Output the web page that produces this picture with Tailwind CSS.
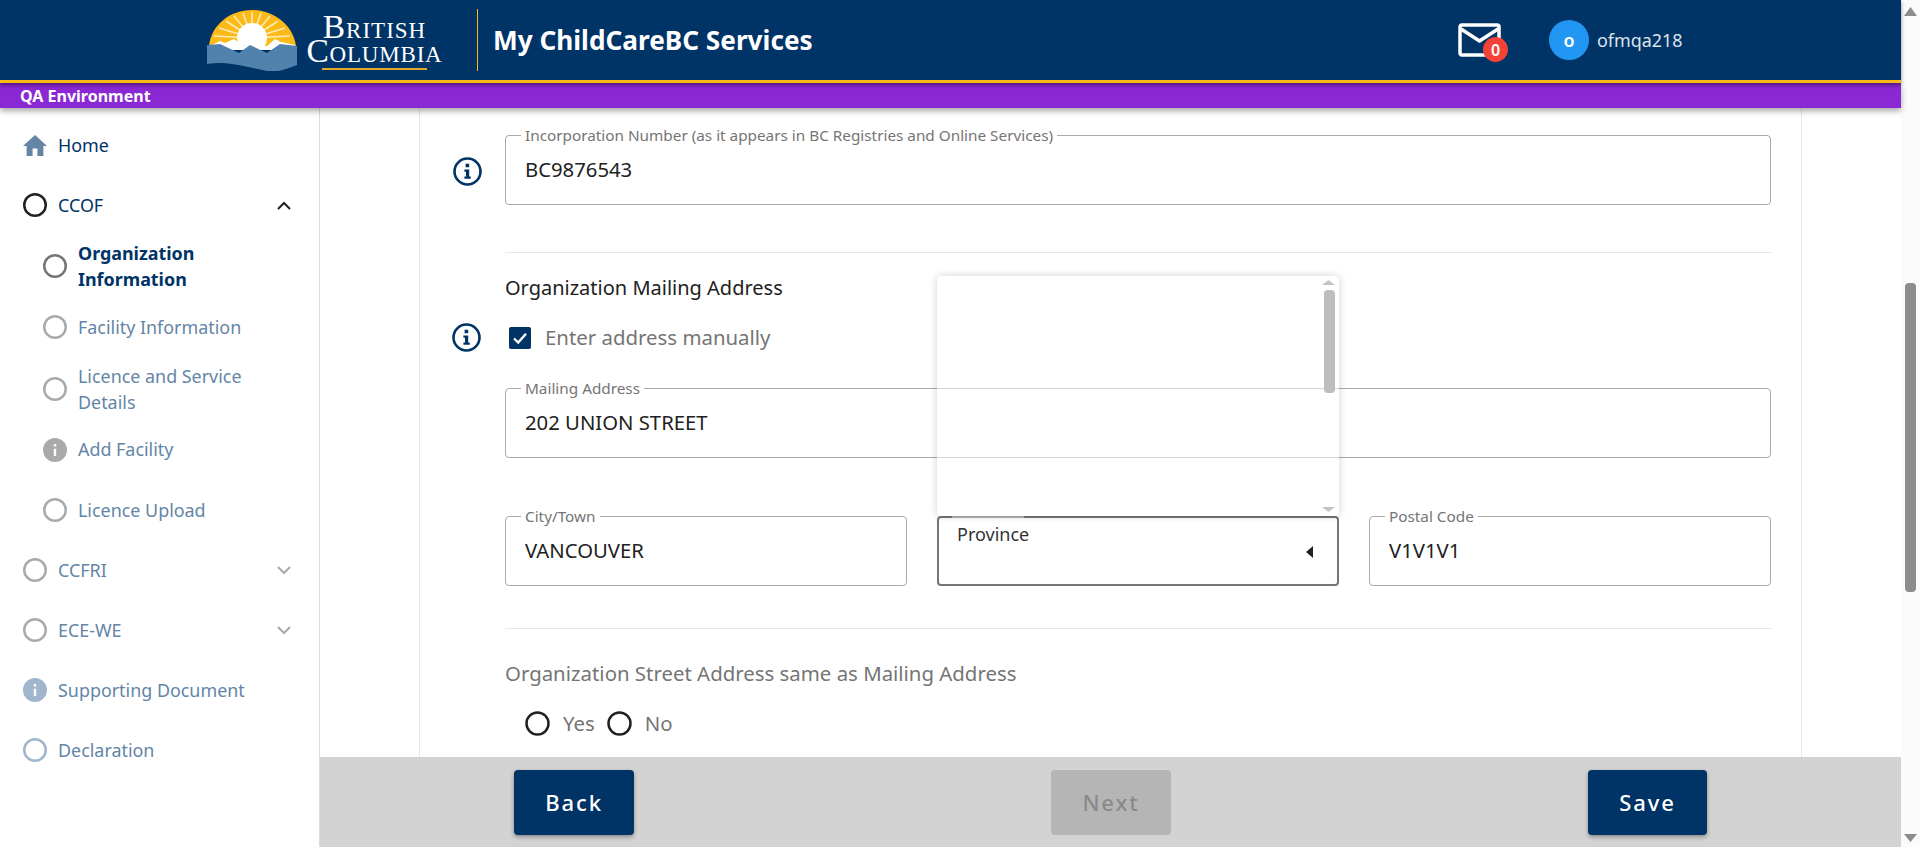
<!DOCTYPE html>
<html lang="en">
<head>
<meta charset="utf-8">
<title>My ChildCareBC Services</title>
<script src="https://cdn.jsdelivr.net/npm/@tailwindcss/browser@4"></script>
</head>
<body class="h-screen overflow-hidden bg-white font-['Noto_Sans',sans-serif]">
<div class="flex h-[847px] w-[1920px]">
  <div class="flex w-[1901px] flex-col">
    <header class="relative z-30 flex h-[83px] shrink-0 items-center border-b-[3px] border-[#fcba19] bg-[#003366] shadow-[0_2px_4px_rgba(0,0,0,0.45)]">
      <svg class="ml-[207px] h-[61px] w-[90px] shrink-0" viewBox="0 0 90 61">
        <path d="M2 36C4 15 23 0 45 0s41 15 44 36z" fill="#fcba19"/>
        <g stroke="#fff5d0" stroke-width="1.6" opacity="0.85">
          <path d="M45 28V2M45 28L36 3M45 28L54 3M45 28L27 6M45 28L63 6M45 28L19 11M45 28L71 11M45 28L12 18M45 28L78 18M45 28L7 26M45 28L83 26"/>
        </g>
        <circle cx="45" cy="28" r="15" fill="#fff"/>
        <path d="M3 36L13 31L18 33L27 29L36 36H60L68 29L74 32L88 35V40H3z" fill="#fff"/>
        <path d="M0 35L13 34L32 43L43 35L60 43L73 34L90 36V55C82 58 72 63 60 61C35 56 20 51 0 54z" fill="#5182ad"/>
      </svg>
      <div class="ml-[10px] mt-[15px] w-[135px] shrink-0 self-start text-center font-['Liberation_Serif',serif] whitespace-nowrap text-white [font-variant:small-caps]">
        <div class="text-[33.5px] leading-[24px] tracking-[1px]">British</div>
        <div class="-mx-[2px] text-[33.5px] leading-[24px] tracking-[0.8px]">Columbia</div>
        <div class="mx-auto mt-[5px] h-[2px] w-[105px] bg-[#e3a82b]"></div>
      </div>
      <div class="ml-[35px] h-[62px] w-[1px] shrink-0 bg-[#fcba19]"></div>
      <div class="ml-[15px] w-[320px] shrink-0 whitespace-nowrap text-[26.2px] leading-[32px] font-bold text-white">My ChildCareBC Services</div>
      <div class="relative ml-[645px] h-[34px] w-[43px] shrink-0">
        <svg class="h-[34px] w-[43px]" viewBox="0 0 43 34" fill="none" stroke="#fff" stroke-width="3.5" stroke-linejoin="round">
          <rect x="2" y="2" width="39" height="30" rx="2"/>
          <path d="M3 6L21.5 18L40 6"/>
        </svg>
        <span class="absolute -right-[7px] top-[14px] flex h-[25px] w-[25px] items-center justify-center rounded-full bg-[#f44336] text-[16px] font-semibold text-white">0</span>
      </div>
      <div class="ml-[48px] flex h-[40px] w-[40px] shrink-0 items-center justify-center rounded-full bg-[#2196f3] text-[18px] font-semibold text-white">o</div>
      <div class="ml-[8px] text-[17.9px] text-[#dbe3eb]">ofmqa218</div>
    </header>
    <div class="relative z-20 flex h-[25px] shrink-0 items-center bg-[#8a28d3] pl-[20px] text-[16px] font-bold text-white shadow-[0_3px_6px_rgba(0,0,0,0.35)]">QA Environment</div>
    <div class="flex min-h-0 flex-1">
      <aside class="w-[320px] shrink-0 border-r border-[#dcdcdc] pt-[7px] pl-[23px] pr-[28px] text-[17.9px] text-[#003366]">
        <div class="flex h-[60px] items-center gap-[11px]">
          <svg class="h-[21px] w-6" viewBox="2 3 20 17" preserveAspectRatio="none"><path fill="#6485a6" d="M10,20V14H14V20H19V12H22L12,3L2,12H5V20H10Z"/></svg>
          <span>Home</span>
        </div>
        <div class="flex h-[60px] items-center gap-[11px]">
          <svg class="h-6 w-6" viewBox="0 0 24 24" fill="none" stroke="#212121" stroke-width="2.5"><circle cx="12" cy="12" r="10.75"/></svg>
          <span class="flex-1">CCOF</span>
          <svg class="h-[9px] w-[14px]" viewBox="0 0 14 9" fill="none" stroke="#212121" stroke-width="2"><path d="M1 8L7 2L13 8"/></svg>
        </div>
        <div class="ml-[20px] flex h-[61px] items-center gap-[11px] font-bold">
          <svg class="h-6 w-6 shrink-0" viewBox="0 0 24 24" fill="none" stroke="#757575" stroke-width="2.5"><circle cx="12" cy="12" r="10.75"/></svg>
          <span class="w-[180px] leading-[26px]">Organization Information</span>
        </div>
        <div class="ml-[20px] flex h-[62px] items-center gap-[11px] text-[#6485a6]">
          <svg class="h-6 w-6 shrink-0" viewBox="0 0 24 24" fill="none" stroke="#aaaaaa" stroke-width="2.5"><circle cx="12" cy="12" r="10.75"/></svg>
          <span class="whitespace-nowrap">Facility Information</span>
        </div>
        <div class="ml-[20px] flex h-[61px] items-center gap-[11px] text-[#6485a6]">
          <svg class="h-6 w-6 shrink-0" viewBox="0 0 24 24" fill="none" stroke="#aaaaaa" stroke-width="2.5"><circle cx="12" cy="12" r="10.75"/></svg>
          <span class="w-[180px] leading-[26px]">Licence and Service Details</span>
        </div>
        <div class="ml-[20px] flex h-[61px] items-center gap-[11px] text-[#6485a6]">
          <svg class="h-6 w-6 shrink-0" viewBox="2 2 20 20"><path fill="#aaaaaa" d="M13,9H11V7H13M13,17H11V11H13M12,2A10,10 0 0,0 2,12A10,10 0 0,0 12,22A10,10 0 0,0 22,12A10,10 0 0,0 12,2Z"/></svg>
          <span>Add Facility</span>
        </div>
        <div class="ml-[20px] flex h-[60px] items-center gap-[11px] text-[#6485a6]">
          <svg class="h-6 w-6 shrink-0" viewBox="0 0 24 24" fill="none" stroke="#aaaaaa" stroke-width="2.5"><circle cx="12" cy="12" r="10.75"/></svg>
          <span>Licence Upload</span>
        </div>
        <div class="flex h-[60px] items-center gap-[11px] text-[#6485a6]">
          <svg class="h-6 w-6" viewBox="0 0 24 24" fill="none" stroke="#aaaaaa" stroke-width="2.5"><circle cx="12" cy="12" r="10.75"/></svg>
          <span class="flex-1">CCFRI</span>
          <svg class="h-[9px] w-[14px]" viewBox="0 0 14 9" fill="none" stroke="#aaaaaa" stroke-width="2"><path d="M1 1L7 7L13 1"/></svg>
        </div>
        <div class="flex h-[60px] items-center gap-[11px] text-[#6485a6]">
          <svg class="h-6 w-6" viewBox="0 0 24 24" fill="none" stroke="#aaaaaa" stroke-width="2.5"><circle cx="12" cy="12" r="10.75"/></svg>
          <span class="flex-1">ECE-WE</span>
          <svg class="h-[9px] w-[14px]" viewBox="0 0 14 9" fill="none" stroke="#aaaaaa" stroke-width="2"><path d="M1 1L7 7L13 1"/></svg>
        </div>
        <div class="flex h-[60px] items-center gap-[11px] text-[#6485a6]">
          <svg class="h-6 w-6 shrink-0" viewBox="2 2 20 20"><path fill="#a0b6cc" d="M13,9H11V7H13M13,17H11V11H13M12,2A10,10 0 0,0 2,12A10,10 0 0,0 12,22A10,10 0 0,0 22,12A10,10 0 0,0 12,2Z"/></svg>
          <span class="whitespace-nowrap">Supporting Document</span>
        </div>
        <div class="flex h-[60px] items-center gap-[11px] text-[#6485a6]">
          <svg class="h-6 w-6" viewBox="0 0 24 24" fill="none" stroke="#a0b6cc" stroke-width="2.5"><circle cx="12" cy="12" r="10.75"/></svg>
          <span>Declaration</span>
        </div>
      </aside>
      <main class="flex min-w-0 flex-1 flex-col">
        <div class="min-h-0 flex-1 overflow-hidden">
          <div class="mx-[99px] h-full border-x border-[#e6e6e6] pt-[27px] pl-[85px] pr-[30px] text-[#212121]">
            <div class="relative h-[70px] rounded-[4px] border border-[#aaaaaa]">
              <svg class="absolute -left-[53px] top-[21px] h-[29px] w-[29px]" viewBox="0 0 29 29"><circle cx="14.5" cy="14.5" r="13" fill="none" stroke="#003366" stroke-width="2.6"/><path fill="#003366" d="M12.6 6.8h3.6v3.4h-3.6zM11.4 12.4h4.8v7h1.6v2.4h-6.4v-2.4h1.6v-4.6h-1.6z"/></svg>
              <span class="absolute -top-[10px] left-[15px] bg-white px-[4px] text-[15.3px] leading-[18px] text-[#757575]">Incorporation Number (as it appears in BC Registries and Online Services)</span>
              <div class="flex h-full items-center pb-[2px] pl-[19px] text-[20.3px]">BC9876543</div>
            </div>
            <div class="mt-[47px] h-[1px] bg-[#e6e6e6]"></div>
            <div class="mt-[21px] text-[20px] leading-[28px]">Organization Mailing Address</div>
            <div class="relative mt-[21px] flex h-[29px] items-center pl-[4px]">
              <svg class="absolute -left-[53px] top-0 h-[29px] w-[29px]" viewBox="0 0 29 29"><circle cx="14.5" cy="14.5" r="13" fill="none" stroke="#003366" stroke-width="2.6"/><path fill="#003366" d="M12.6 6.8h3.6v3.4h-3.6zM11.4 12.4h4.8v7h1.6v2.4h-6.4v-2.4h1.6v-4.6h-1.6z"/></svg>
              <svg class="h-[22px] w-[22px] shrink-0" viewBox="0 0 22 22"><rect width="22" height="22" rx="2" fill="#003366"/><path d="M5 11.5L9.2 15.5L17 6.8" fill="none" stroke="#fff" stroke-width="2.4"/></svg>
              <span class="ml-[14px] text-[20.4px] text-[#757575]">Enter address manually</span>
            </div>
            <div class="relative mt-[36px] h-[70px] rounded-[4px] border border-[#aaaaaa]">
              <span class="absolute -top-[10px] left-[15px] bg-white px-[4px] text-[15.3px] leading-[18px] text-[#757575]">Mailing Address</span>
              <div class="flex h-full items-center pb-[2px] pl-[19px] text-[20.3px]">202 UNION STREET</div>
            </div>
            <div class="mt-[58px] grid grid-cols-3 gap-[30px]">
              <div class="relative h-[70px] rounded-[4px] border border-[#aaaaaa]">
                <span class="absolute -top-[10px] left-[15px] bg-white px-[4px] text-[15.3px] leading-[18px] text-[#757575]">City/Town</span>
                <div class="flex h-full items-center pb-[2px] pl-[19px] text-[20.3px]">VANCOUVER</div>
              </div>
              <div class="relative h-[70px] rounded-[4px] border-2 border-[#757575]">
                <span class="absolute -top-[2px] left-[13px] h-[2px] w-[72px] bg-[#b0b0b0]"></span>
                <span class="absolute left-[18px] top-[4px] text-[18px] leading-[24px] text-[#333333]">Province</span>
                <svg class="absolute right-[24px] top-[28px] h-[12px] w-[7px]" viewBox="0 0 7 12"><path d="M7 0V12L0 6z" fill="#212121"/></svg>
                <div class="absolute -left-[2px] -right-[2px] bottom-[calc(100%+2px)] z-10 flex h-[240px] flex-col items-end rounded-[4px] bg-white/50 pr-[4px] pt-[4px] shadow-[0_0_8px_rgba(0,0,0,0.18)]">
                  <svg class="h-[5px] w-[13px] shrink-0" viewBox="0 0 13 5"><path d="M6.5 0L13 5H0z" fill="#c4c4c4"/></svg>
                  <div class="mt-[5px] h-[103px] w-[11px] rounded-[4px] bg-[#bdbdbd]"></div>
                  <div class="flex-1"></div>
                  <svg class="mb-[4px] h-[5px] w-[13px] shrink-0" viewBox="0 0 13 5"><path d="M6.5 5L13 0H0z" fill="#c4c4c4"/></svg>
                </div>
              </div>
              <div class="relative h-[70px] rounded-[4px] border border-[#aaaaaa]">
                <span class="absolute -top-[10px] left-[15px] bg-white px-[4px] text-[15.3px] leading-[18px] text-[#757575]">Postal Code</span>
                <div class="flex h-full items-center pb-[2px] pl-[19px] text-[20.3px]">V1V1V1</div>
              </div>
            </div>
            <div class="mt-[42px] h-[1px] bg-[#e6e6e6]"></div>
            <div class="mt-[30px] text-[20.4px] leading-[28px] text-[#757575]">Organization Street Address same as Mailing Address</div>
            <div class="mt-[22px] ml-[20px] flex h-[28px] items-center text-[20.4px] text-[#757575]">
              <svg class="h-[25px] w-[25px] shrink-0" viewBox="0 0 25 25" fill="none" stroke="#212121" stroke-width="2.5"><circle cx="12.5" cy="12.5" r="11"/></svg>
              <span class="ml-[13px]">Yes</span>
              <svg class="ml-[12px] h-[25px] w-[25px] shrink-0" viewBox="0 0 25 25" fill="none" stroke="#212121" stroke-width="2.5"><circle cx="12.5" cy="12.5" r="11"/></svg>
              <span class="ml-[13px]">No</span>
            </div>
          </div>
        </div>
        <footer class="flex h-[90px] shrink-0 items-center justify-between bg-[#d3d3d3] px-[194px] text-[22px] tracking-[1.9px]">
          <button class="flex h-[65px] w-[120px] items-center justify-center rounded-[4px] bg-[#003366] font-medium text-white shadow-[0_2px_4px_rgba(0,0,0,0.35)]">Back</button>
          <button class="flex h-[65px] w-[120px] items-center justify-center rounded-[4px] bg-[#b5b5b5] font-medium text-[#8a8a8a]">Next</button>
          <button class="flex h-[65px] w-[119px] items-center justify-center rounded-[4px] bg-[#003366] font-medium text-white shadow-[0_2px_4px_rgba(0,0,0,0.35)]">Save</button>
        </footer>
      </main>
    </div>
  </div>
  <div class="flex w-[19px] shrink-0 flex-col items-center bg-[#fbfbfb] pb-[5px] pt-[7px]">
    <svg class="h-[9px] w-[13px] shrink-0" viewBox="0 0 13 9"><path d="M6.5 0L13 9H0z" fill="#8c8c8c"/></svg>
    <div class="mt-[267px] h-[309px] w-[11px] rounded-[4px] bg-[#8c8c8c]"></div>
    <div class="flex-1"></div>
    <svg class="h-[8px] w-[13px] shrink-0" viewBox="0 0 13 8"><path d="M6.5 8L13 0H0z" fill="#8c8c8c"/></svg>
  </div>
</div>
</body>
</html>
